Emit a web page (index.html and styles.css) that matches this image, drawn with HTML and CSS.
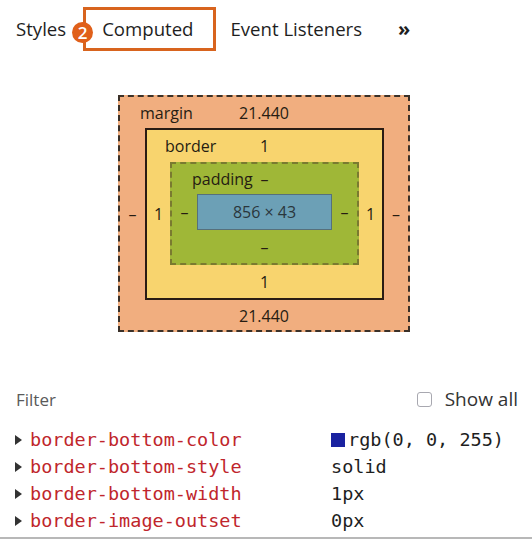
FILE: index.html
```html
<!DOCTYPE html>
<html>
<head>
<meta charset="utf-8">
<link rel="stylesheet" href="styles.css">
</head>
<body>
<div class="panel">
  <div class="tabs">
    <span class="tab">Styles</span>
    <span class="tab tab-active"><span class="badge">2</span>Computed</span>
    <span class="tab">Event Listeners</span>
    <span class="tab more">»</span>
  </div>

  <div class="boxmodel-wrap">
    <div class="bm bm-margin">
      <div class="bm-top"><span class="bm-title">margin</span><span class="bm-val">21.440</span><span></span></div>
      <div class="bm-side">–</div>
      <div class="bm bm-border">
        <div class="bm-top"><span class="bm-title">border</span><span class="bm-val">1</span><span></span></div>
        <div class="bm-side">1</div>
        <div class="bm bm-padding">
          <div class="bm-top"><span class="bm-title">padding</span><span class="bm-val">–</span><span></span></div>
          <div class="bm-side">–</div>
          <div class="bm-content">856 × 43</div>
          <div class="bm-side">–</div>
          <div class="bm-bottom">–</div>
        </div>
        <div class="bm-side">1</div>
        <div class="bm-bottom">1</div>
      </div>
      <div class="bm-side">–</div>
      <div class="bm-bottom">21.440</div>
    </div>
  </div>

  <div class="filter-row">
    <span class="filter">Filter</span>
    <label class="showall"><span class="checkbox"></span>Show all</label>
  </div>

  <div class="props">
    <div class="prop"><span class="arrow"></span><span class="pname">border-bottom-color</span><span class="pval"><span class="swatch"></span>rgb(0, 0, 255)</span></div>
    <div class="prop"><span class="arrow"></span><span class="pname">border-bottom-style</span><span class="pval">solid</span></div>
    <div class="prop"><span class="arrow"></span><span class="pname">border-bottom-width</span><span class="pval">1px</span></div>
    <div class="prop"><span class="arrow"></span><span class="pname">border-image-outset</span><span class="pval">0px</span></div>
  </div>
  <div class="bottom-line"></div>
</div>
</body>
</html>
```

FILE: styles.css
```css
html, body {
  margin: 0;
  padding: 0;
  background: #ffffff;
}
.panel {
  width: 532px;
  height: 540px;
  font-family: "Open Sans", "Noto Sans", sans-serif;
  color: #222;
  overflow: hidden;
}
.tabs {
  display: flex;
  align-items: center;
  height: 58px;
  padding-left: 16px;
  font-size: 18.6px;
}
.tab {
  color: #1e1e1e;
  line-height: 24px;
}
.tab-active {
  position: relative;
  margin-left: 17px;
  padding: 7px 20px 7px 16px;
  border: 3px solid #d8641e;
}
.badge {
  position: absolute;
  left: -14px;
  top: 12px;
  width: 21px;
  height: 21px;
  border-radius: 50%;
  background: #e0601a;
  color: #fff;
  font-size: 17px;
  line-height: 21px;
  text-align: center;
  font-weight: 600;
}
.tab + .tab:not(.tab-active) {
  margin-left: 14px;
}
.more {
  margin-left: 36px !important;
  font-weight: 700;
  font-size: 20px;
}

.boxmodel-wrap {
  padding: 37px 0 0 118px;
  height: 237px;
}
.bm {
  display: grid;
  box-sizing: border-box;
  font-size: 16px;
  color: #261c12;
}
.bm-margin {
  width: 292px;
  height: 237px;
  grid-template-columns: 25px 239px 24px;
  grid-template-rows: 31px 172px 31px;
  border: 2px dashed #3a3028;
  background: #f1ae7f;
}
.bm-border {
  width: 239px;
  height: 172px;
  grid-template-columns: 23px 189px 23px;
  grid-template-rows: 32px 103px 33px;
  border: 2px solid #2a1c14;
  background: #f8d46e;
}
.bm-padding {
  width: 189px;
  height: 103px;
  grid-template-columns: 25px 135px 25px;
  grid-template-rows: 30px 36px 33px;
  border: 2px dashed #7a7a30;
  background: #9fb737;
}
.bm-top {
  grid-column: 1 / 4;
  display: grid;
  grid-template-columns: 1fr auto 1fr;
  align-items: center;
}
.bm-margin > .bm-top > .bm-title { padding-left: 20px; }
.bm-border > .bm-top > .bm-title { padding-left: 18px; }
.bm-padding > .bm-top > .bm-title { padding-left: 20px; }
.bm-val {
  text-align: center;
}
.bm-side {
  display: flex;
  align-items: center;
  justify-content: center;
}
.bm-bottom {
  grid-column: 1 / 4;
  display: flex;
  align-items: center;
  justify-content: center;
}
.bm-content {
  box-sizing: border-box;
  width: 135px;
  height: 36px;
  border: 1px solid #56707c;
  background: #6ca0b6;
  display: flex;
  align-items: center;
  justify-content: center;
  color: #2a363c;
}

.filter-row {
  display: flex;
  align-items: center;
  justify-content: space-between;
  margin-top: 54px;
  padding: 0 14px 0 16px;
  height: 26px;
}
.filter {
  font-size: 17px;
  color: #5a5a5a;
}
.showall {
  display: flex;
  align-items: center;
  font-size: 19px;
  color: #333;
}
.checkbox {
  width: 13px;
  height: 13px;
  border: 1px solid #a8a8b0;
  border-radius: 3px;
  margin-right: 13px;
}

.props {
  margin-top: 14px;
  font-family: "DejaVu Sans Mono", "Liberation Mono", monospace;
  font-size: 18.5px;
}
.prop {
  display: grid;
  grid-template-columns: 15px 301px auto;
  align-items: center;
  height: 27px;
  padding-left: 15px;
}
.arrow {
  width: 0;
  height: 0;
  border-top: 5px solid transparent;
  border-bottom: 5px solid transparent;
  border-left: 7px solid #333;
}
.pname {
  color: #c0262c;
}
.pval {
  color: #1e1e1e;
  display: flex;
  align-items: center;
}
.swatch {
  width: 14px;
  height: 14px;
  background: #1a22a0;
  margin-right: 3px;
}
.bottom-line {
  margin-top: 3px;
  height: 2px;
  background: #b8b8b8;
}
```
